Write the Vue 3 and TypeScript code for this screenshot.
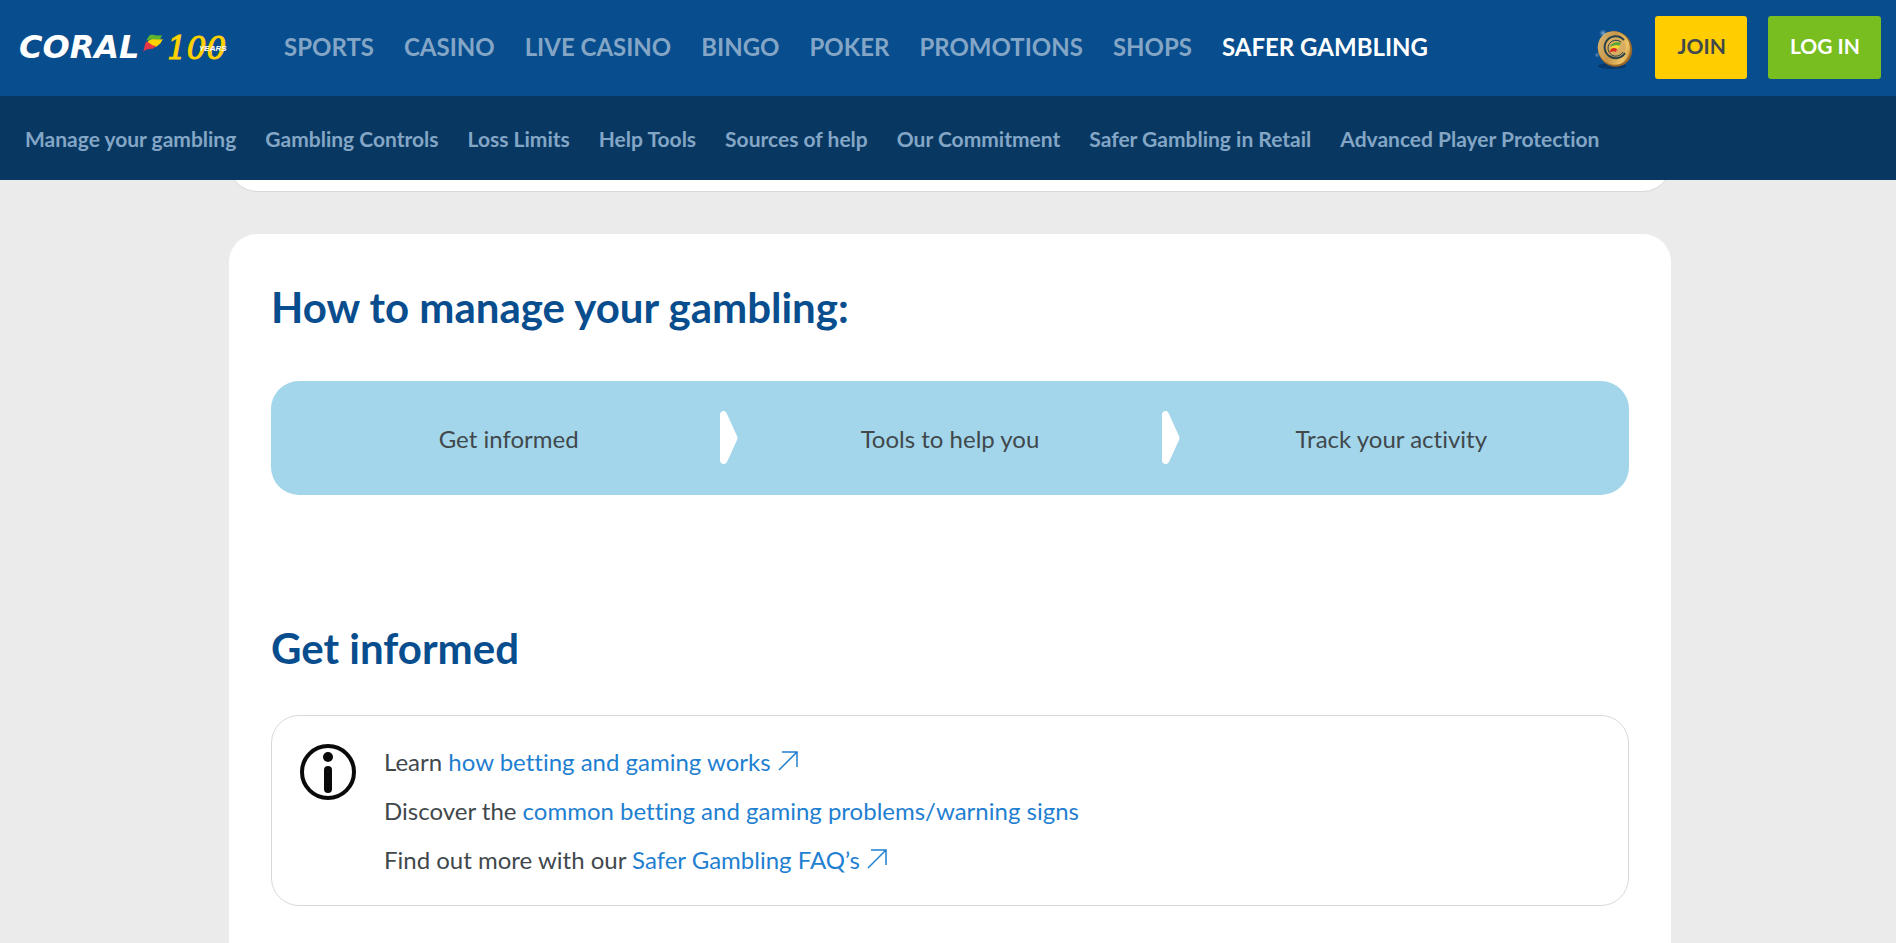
<script setup lang="ts">
interface NavItem {
  label: string
  active?: boolean
}

interface InfoLine {
  lead: string
  link: string
  external: boolean
}

const mainNav: NavItem[] = [
  { label: 'SPORTS' },
  { label: 'CASINO' },
  { label: 'LIVE CASINO' },
  { label: 'BINGO' },
  { label: 'POKER' },
  { label: 'PROMOTIONS' },
  { label: 'SHOPS' },
  { label: 'SAFER GAMBLING', active: true },
]

const subNav: string[] = [
  'Manage your gambling',
  'Gambling Controls',
  'Loss Limits',
  'Help Tools',
  'Sources of help',
  'Our Commitment',
  'Safer Gambling in Retail',
  'Advanced Player Protection',
]

const steps: string[] = ['Get informed', 'Tools to help you', 'Track your activity']

const infoLines: InfoLine[] = [
  { lead: 'Learn', link: 'how betting and gaming works', external: true },
  { lead: 'Discover the', link: 'common betting and gaming problems/warning signs', external: false },
  { lead: 'Find out more with our', link: 'Safer Gambling FAQ’s', external: true },
]
</script>

<template>
  <div class="page">
    <header class="site-header">
      <div class="top-bar">
        <a class="logo" href="#" aria-label="Coral 100 years">
          <svg width="212" height="40" viewBox="0 0 212 40">
            <text class="logo-name" x="0" y="30">CORAL</text>
            <path d="M130 8 C133 5 137 9 143 7 L141 12 C136 14 132 10 127 13 Z" fill="#5fb52f" />
            <path d="M129 13 C134 9 138 13 144 11 L141 16 C139 16 139 19 136 19 C133 18 131 16 128 17 Z" fill="#ffd200" />
            <path d="M127 14 C130 13 131 18 137 18 C135 21 132 21 130 21 C128 21 126 22 124 24 C126 20 125 18 127 14 Z" fill="#e73545" />
            <text class="logo-hundred" x="148" y="31">100</text>
            <text class="logo-years" x="180" y="23">YEARS</text>
          </svg>
        </a>
        <nav class="main-nav" aria-label="Products">
          <a
            v-for="item in mainNav"
            :key="item.label"
            href="#"
            class="main-link"
            :class="{ active: item.active }"
          >{{ item.label }}</a>
        </nav>
        <div class="account">
          <a class="coin" href="#" aria-label="Rewards">
            <svg width="42" height="48" viewBox="0 0 42 48">
              <defs>
                <linearGradient id="gold" x1="0" y1="0" x2="1" y2="1">
                  <stop offset="0" stop-color="#d9bd79" />
                  <stop offset="0.45" stop-color="#c8964a" />
                  <stop offset="0.75" stop-color="#edc568" />
                  <stop offset="1" stop-color="#a66a1f" />
                </linearGradient>
                <radialGradient id="glow">
                  <stop offset="0" stop-color="#ffffff" stop-opacity="0.9" />
                  <stop offset="1" stop-color="#8fb8dd" stop-opacity="0" />
                </radialGradient>
              </defs>
              <ellipse cx="20" cy="42" rx="14" ry="3" fill="#06305c" opacity="0.7" />
              <ellipse cx="23" cy="25" rx="17" ry="18" fill="#9a692a" transform="rotate(-25 23 25)" />
              <ellipse cx="22" cy="24" rx="16" ry="17" fill="url(#gold)" transform="rotate(-25 22 24)" />
              <circle cx="23" cy="24" r="11" fill="#d9ad60" />
              <path d="M32 16 A11 11 0 1 0 33 29" fill="none" stroke="#29434a" stroke-width="2" />
              <path d="M29 18 A8 8 0 1 0 31 28" fill="none" stroke="#29434a" stroke-width="1" />
              <path d="M19 21 Q23 17 29 19 L27 22 Q23 20 18 23 Z" fill="#4fa636" />
              <path d="M19 23 Q23 20 28 22 L26 25 Q22 23 18 26 Z" fill="#f3d735" />
              <path d="M19 25 Q22 23 25 25 L24 28 Q21 26 17 29 Z" fill="#d92d26" />
              <circle cx="11" cy="9" r="4" fill="url(#glow)" opacity="0.6" />
              <circle cx="5" cy="31" r="3" fill="url(#glow)" opacity="0.4" />
            </svg>
          </a>
          <button type="button" class="btn join">JOIN</button>
          <button type="button" class="btn login">LOG IN</button>
        </div>
      </div>
      <nav class="sub-nav" aria-label="Safer gambling">
        <a v-for="label in subNav" :key="label" href="#" class="sub-link">{{ label }}</a>
      </nav>
    </header>

    <main class="content">
      <section class="card previous"></section>
      <section class="card manage">
        <h2 class="title">How to manage your gambling:</h2>
        <div class="steps">
          <template v-for="(step, index) in steps" :key="step">
            <svg v-if="index > 0" class="step-arrow" width="18" height="54" viewBox="0 0 18 54">
              <path d="M0 4 Q0 0 4 0 Q6 0 7 3 L17 25 Q18 27 17 29 L7 51 Q6 53 4 53 Q0 53 0 49 Z" fill="#ffffff" />
            </svg>
            <div class="step">{{ step }}</div>
          </template>
        </div>

        <h2 class="title second">Get informed</h2>
        <div class="info-box">
          <svg class="info-icon" width="56" height="56" viewBox="0 0 56 56">
            <circle cx="28" cy="28" r="26" fill="none" stroke="#0a0a0a" stroke-width="4" />
            <circle cx="28" cy="13" r="5" fill="#0a0a0a" />
            <rect x="24" y="22" width="8" height="27" rx="4" fill="#0a0a0a" />
          </svg>
          <div class="info-lines">
            <p v-for="line in infoLines" :key="line.link" class="info-line">
              {{ line.lead }}
              <a href="#" class="info-link">{{ line.link }}<svg
                v-if="line.external"
                class="external"
                width="20"
                height="20"
                viewBox="0 0 20 20"
              ><path d="M1 19 L19 1 M4 1 H19 V16" fill="none" stroke="currentColor" stroke-width="1.5" /></svg></a>
            </p>
          </div>
        </div>
      </section>
    </main>
  </div>
</template>

<style>
body {
  margin: 0;
  background: #ebebeb;
}
</style>

<style scoped>
.page {
  display: flex;
  flex-direction: column;
  min-height: 100vh;
  font-family: Lato, "Liberation Sans", sans-serif;
  font-variant-ligatures: none;
  color: #41484c;
  background: #ebebeb;
}

a {
  text-decoration: none;
}

.site-header {
  position: sticky;
  top: 0;
  z-index: 1;
}

.top-bar {
  display: flex;
  align-items: center;
  height: 96px;
  padding: 0 15px 0 19px;
  background: #084d8d;
}

.logo {
  display: flex;
  flex: none;
}

.logo svg {
  overflow: visible;
}

.logo-name {
  font: italic bold 32px "DejaVu Sans", sans-serif;
  fill: #ffffff;
}

.logo-hundred {
  font: italic 31px "DejaVu Serif", serif;
  fill: #ffd200;
  stroke: #ffd200;
  stroke-width: 1px;
}

.logo-years {
  font: italic bold 8px "Liberation Sans", sans-serif;
  fill: #ffffff;
}

.main-nav {
  display: flex;
  gap: 30px;
  margin-left: 53px;
  padding-bottom: 2px;
}

.main-link {
  font-size: 24px;
  font-weight: 700;
  line-height: 32px;
  white-space: nowrap;
  color: #84a6c6;
}

.main-link.active {
  color: #ffffff;
}

.account {
  display: flex;
  align-items: center;
  gap: 21px;
  margin-left: auto;
}

.coin {
  display: flex;
}

.btn {
  height: 63px;
  margin-bottom: 1px;
  padding: 0 21px 4px 22px;
  border: 0;
  border-radius: 3px;
  font-family: inherit;
  font-size: 21px;
  font-weight: 700;
  cursor: pointer;
}

.join {
  color: #41484c;
  background: #ffcd00;
}

.login {
  color: #ffffff;
  background: #78be20;
}

.sub-nav {
  display: flex;
  align-items: center;
  gap: 29px;
  height: 84px;
  padding: 0 25px;
  background: #083861;
}

.sub-link {
  padding-top: 2px;
  font-size: 21px;
  font-weight: 700;
  line-height: 28px;
  white-space: nowrap;
  color: #84a6c6;
}

.content {
  display: flex;
  flex: 1;
  flex-direction: column;
  align-items: center;
  gap: 42px;
  padding: 0 24px 0 28px;
}

.card {
  box-sizing: border-box;
  width: 100%;
  max-width: 1442px;
  background: #ffffff;
}

.previous {
  height: 56px;
  margin-top: -44px;
  border: 1px solid #d8d8d8;
  border-radius: 0 0 28px 28px;
}

.manage {
  flex: 1;
  padding: 42px 42px 28px;
  border-radius: 28px 28px 0 0;
}

.title {
  margin: 0 0 42px;
  font-size: 42px;
  font-weight: 700;
  line-height: 63px;
  color: #084d8d;
}

.title.second {
  margin: 122px 0 35px;
}

.steps {
  display: flex;
  align-items: center;
  height: 114px;
  padding: 0 26px;
  border-radius: 28px;
  background: #a3d6eb;
}

.step {
  flex: 1;
  font-size: 24px;
  line-height: 35px;
  text-align: center;
}

.step-arrow {
  flex: none;
}

.info-box {
  display: flex;
  gap: 28px;
  padding: 21px 28px;
  border: 1px solid #d8d8d8;
  border-radius: 28px;
}

.info-icon {
  flex: none;
  margin-top: 7px;
}

.info-line {
  margin: 0;
  font-size: 24px;
  line-height: 49px;
}

.info-link {
  color: #1f7fd1;
}

.external {
  margin-left: 7px;
}
</style>
